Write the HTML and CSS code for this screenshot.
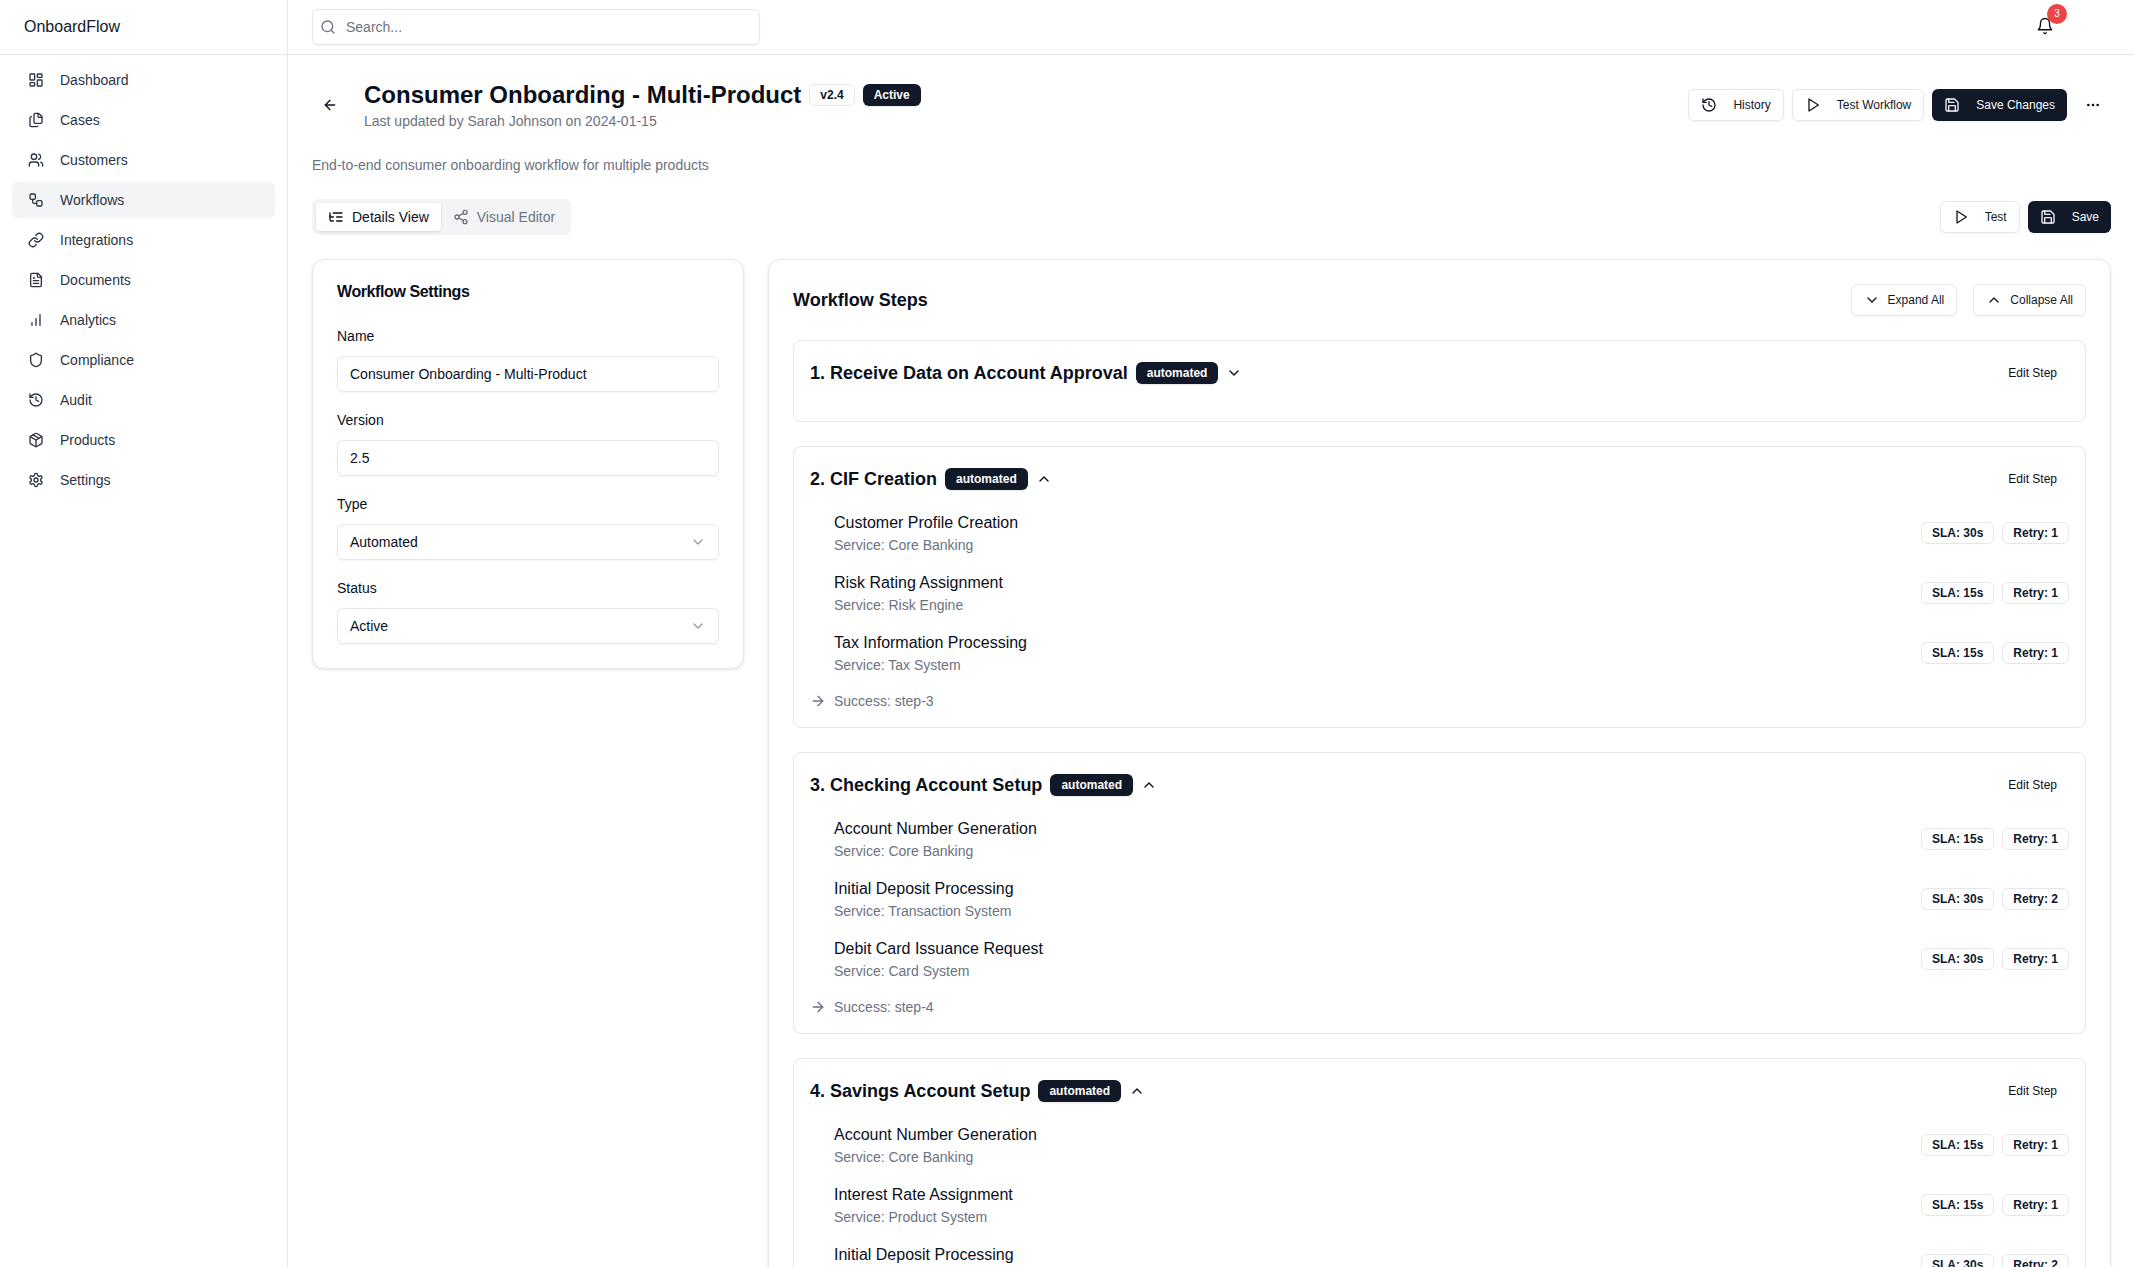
FILE: index.html
```html
<!DOCTYPE html>
<html lang="en">
<head>
<meta charset="utf-8">
<title>OnboardFlow</title>
<link rel="stylesheet" href="styles.css">
</head>
<body>
<svg class="defs" width="0" height="0" aria-hidden="true">
  <defs>
    <symbol id="i-dash" viewBox="0 0 24 24"><rect width="7" height="9" x="3" y="3" rx="1"/><rect width="7" height="5" x="14" y="3" rx="1"/><rect width="7" height="9" x="14" y="12" rx="1"/><rect width="7" height="5" x="3" y="16" rx="1"/></symbol>
    <symbol id="i-files" viewBox="0 0 24 24"><path d="M15 2h-4a2 2 0 0 0-2 2v11a2 2 0 0 0 2 2h8a2 2 0 0 0 2-2V8"/><path d="M16.706 2.706A2.4 2.4 0 0 0 15 2v5a1 1 0 0 0 1 1h5a2.4 2.4 0 0 0-.706-1.706z"/><path d="M5 7a2 2 0 0 0-2 2v11a2 2 0 0 0 2 2h8a2 2 0 0 0 1.732-1"/></symbol>
    <symbol id="i-users" viewBox="0 0 24 24"><path d="M16 21v-2a4 4 0 0 0-4-4H6a4 4 0 0 0-4 4v2"/><circle cx="9" cy="7" r="4"/><path d="M22 21v-2a4 4 0 0 0-3-3.87"/><path d="M16 3.13a4 4 0 0 1 0 7.75"/></symbol>
    <symbol id="i-flow" viewBox="0 0 24 24"><rect width="8" height="8" x="3" y="3" rx="2"/><path d="M7 11v4a2 2 0 0 0 2 2h4"/><rect width="8" height="8" x="13" y="13" rx="2"/></symbol>
    <symbol id="i-link" viewBox="0 0 24 24"><path d="M10 13a5 5 0 0 0 7.54.54l3-3a5 5 0 0 0-7.07-7.07l-1.72 1.71"/><path d="M14 11a5 5 0 0 0-7.54-.54l-3 3a5 5 0 0 0 7.07 7.07l1.71-1.71"/></symbol>
    <symbol id="i-file" viewBox="0 0 24 24"><path d="M15 2H6a2 2 0 0 0-2 2v16a2 2 0 0 0 2 2h12a2 2 0 0 0 2-2V7Z"/><path d="M14 2v4a2 2 0 0 0 2 2h4"/><path d="M10 9H8"/><path d="M16 13H8"/><path d="M16 17H8"/></symbol>
    <symbol id="i-chart" viewBox="0 0 24 24"><path d="M12 20V10"/><path d="M18 20V4"/><path d="M6 20v-4"/></symbol>
    <symbol id="i-shield" viewBox="0 0 24 24"><path d="M20 13c0 5-3.5 7.5-7.66 8.95a1 1 0 0 1-.67-.01C7.5 20.5 4 18 4 13V6a1 1 0 0 1 1-1c2 0 4.5-1.2 6.24-2.72a1.17 1.17 0 0 1 1.52 0C14.51 3.81 17 5 19 5a1 1 0 0 1 1 1z"/></symbol>
    <symbol id="i-history" viewBox="0 0 24 24"><path d="M3 12a9 9 0 1 0 9-9 9.75 9.75 0 0 0-6.74 2.74L3 8"/><path d="M3 3v5h5"/><path d="M12 7v5l4 2"/></symbol>
    <symbol id="i-package" viewBox="0 0 24 24"><path d="m7.5 4.27 9 5.15"/><path d="M21 8a2 2 0 0 0-1-1.73l-7-4a2 2 0 0 0-2 0l-7 4A2 2 0 0 0 3 8v8a2 2 0 0 0 1 1.73l7 4a2 2 0 0 0 2 0l7-4A2 2 0 0 0 21 16Z"/><path d="m3.3 7 8.7 5 8.7-5"/><path d="M12 22V12"/></symbol>
    <symbol id="i-gear" viewBox="0 0 24 24"><path d="M12.22 2h-.44a2 2 0 0 0-2 2v.18a2 2 0 0 1-1 1.73l-.43.25a2 2 0 0 1-2 0l-.15-.08a2 2 0 0 0-2.73.73l-.22.38a2 2 0 0 0 .73 2.73l.15.1a2 2 0 0 1 1 1.72v.51a2 2 0 0 1-1 1.74l-.15.09a2 2 0 0 0-.73 2.73l.22.38a2 2 0 0 0 2.73.73l.15-.08a2 2 0 0 1 2 0l.43.25a2 2 0 0 1 1 1.73V20a2 2 0 0 0 2 2h.44a2 2 0 0 0 2-2v-.18a2 2 0 0 1 1-1.73l.43-.25a2 2 0 0 1 2 0l.15.08a2 2 0 0 0 2.73-.73l.22-.39a2 2 0 0 0-.73-2.73l-.15-.08a2 2 0 0 1-1-1.74v-.5a2 2 0 0 1 1-1.74l.15-.09a2 2 0 0 0 .73-2.73l-.22-.38a2 2 0 0 0-2.73-.73l-.15.08a2 2 0 0 1-2 0l-.43-.25a2 2 0 0 1-1-1.73V4a2 2 0 0 0-2-2z"/><circle cx="12" cy="12" r="3"/></symbol>
    <symbol id="i-search" viewBox="0 0 24 24"><path d="m21 21-4.3-4.3"/><circle cx="11" cy="11" r="8"/></symbol>
    <symbol id="i-bell" viewBox="0 0 24 24"><path d="M6 8a6 6 0 0 1 12 0c0 7 3 9 3 9H3s3-2 3-9"/><path d="M10.3 21a1.94 1.94 0 0 0 3.4 0"/></symbol>
    <symbol id="i-back" viewBox="0 0 24 24"><path d="m12 19-7-7 7-7"/><path d="M19 12H5"/></symbol>
    <symbol id="i-next" viewBox="0 0 24 24"><path d="M5 12h14"/><path d="m12 5 7 7-7 7"/></symbol>
    <symbol id="i-play" viewBox="0 0 24 24"><polygon points="6 3 20 12 6 21 6 3"/></symbol>
    <symbol id="i-save" viewBox="0 0 24 24"><path d="M15.2 3a2 2 0 0 1 1.4.6l3.8 3.8a2 2 0 0 1 .6 1.4V19a2 2 0 0 1-2 2H5a2 2 0 0 1-2-2V5a2 2 0 0 1 2-2z"/><path d="M17 21v-7a1 1 0 0 0-1-1H8a1 1 0 0 0-1 1v7"/><path d="M7 3v4a1 1 0 0 0 1 1h7"/></symbol>
    <symbol id="i-more" viewBox="0 0 24 24"><circle cx="12" cy="12" r="1"/><circle cx="19" cy="12" r="1"/><circle cx="5" cy="12" r="1"/></symbol>
    <symbol id="i-down" viewBox="0 0 24 24"><path d="m6 9 6 6 6-6"/></symbol>
    <symbol id="i-up" viewBox="0 0 24 24"><path d="m18 15-6-6-6 6"/></symbol>
    <symbol id="i-tree" viewBox="0 0 24 24"><path d="M21 12h-8"/><path d="M21 6H8"/><path d="M21 18h-8"/><path d="M3 6v4c0 1.1.9 2 2 2h3"/><path d="M3 10v6c0 1.1.9 2 2 2h3"/></symbol>
    <symbol id="i-share" viewBox="0 0 24 24"><circle cx="18" cy="5" r="3"/><circle cx="6" cy="12" r="3"/><circle cx="18" cy="19" r="3"/><line x1="8.59" x2="15.42" y1="13.51" y2="17.49"/><line x1="15.41" x2="8.59" y1="6.51" y2="10.49"/></symbol>
  </defs>
</svg>
<div class="app">
  <aside class="sidebar">
    <div class="brand">OnboardFlow</div>
    <nav class="nav">
      <a class="nav-item"><svg class="ic"><use href="#i-dash"/></svg>Dashboard</a>
      <a class="nav-item"><svg class="ic"><use href="#i-files"/></svg>Cases</a>
      <a class="nav-item"><svg class="ic"><use href="#i-users"/></svg>Customers</a>
      <a class="nav-item is-active"><svg class="ic"><use href="#i-flow"/></svg>Workflows</a>
      <a class="nav-item"><svg class="ic"><use href="#i-link"/></svg>Integrations</a>
      <a class="nav-item"><svg class="ic"><use href="#i-file"/></svg>Documents</a>
      <a class="nav-item"><svg class="ic"><use href="#i-chart"/></svg>Analytics</a>
      <a class="nav-item"><svg class="ic"><use href="#i-shield"/></svg>Compliance</a>
      <a class="nav-item"><svg class="ic"><use href="#i-history"/></svg>Audit</a>
      <a class="nav-item"><svg class="ic"><use href="#i-package"/></svg>Products</a>
      <a class="nav-item"><svg class="ic"><use href="#i-gear"/></svg>Settings</a>
    </nav>
  </aside>
  <div class="main">
    <header class="topbar">
      <div class="search"><svg class="ic search-ic"><use href="#i-search"/></svg><span>Search...</span></div>
      <div class="bell"><svg class="ic bell-ic"><use href="#i-bell"/></svg><span class="bell-count">3</span></div>
    </header>
    <main class="content">
      <div class="page-head">
        <div class="page-title-group">
          <svg class="ic back"><use href="#i-back"/></svg>
          <div>
            <div class="title-row">
              <h1 class="title">Consumer Onboarding - Multi-Product</h1>
              <span class="badge badge-outline">v2.4</span>
              <span class="badge badge-dark">Active</span>
            </div>
            <p class="updated">Last updated by Sarah Johnson on 2024-01-15</p>
          </div>
        </div>
        <div class="actions">
          <button class="btn"><svg class="ic"><use href="#i-history"/></svg>History</button>
          <button class="btn"><svg class="ic"><use href="#i-play"/></svg>Test Workflow</button>
          <button class="btn btn-dark"><svg class="ic"><use href="#i-save"/></svg>Save Changes</button>
          <span class="more"><svg class="ic"><use href="#i-more"/></svg></span>
        </div>
      </div>
      <p class="desc">End-to-end consumer onboarding workflow for multiple products</p>
      <div class="toolbar">
        <div class="tabs">
          <span class="tab is-active"><svg class="ic"><use href="#i-tree"/></svg>Details View</span>
          <span class="tab"><svg class="ic"><use href="#i-share"/></svg>Visual Editor</span>
        </div>
        <div class="toolbar-actions">
          <button class="btn"><svg class="ic"><use href="#i-play"/></svg>Test</button>
          <button class="btn btn-dark"><svg class="ic"><use href="#i-save"/></svg>Save</button>
        </div>
      </div>
      <div class="columns">
        <section class="card settings">
          <h2 class="settings-title">Workflow Settings</h2>
          <div class="field"><label class="label">Name</label><div class="control">Consumer Onboarding - Multi-Product</div></div>
          <div class="field"><label class="label">Version</label><div class="control">2.5</div></div>
          <div class="field"><label class="label">Type</label><div class="control">Automated<svg class="ic chev"><use href="#i-down"/></svg></div></div>
          <div class="field"><label class="label">Status</label><div class="control">Active<svg class="ic chev"><use href="#i-down"/></svg></div></div>
        </section>
        <section class="card steps">
          <div class="steps-head">
            <h2 class="steps-title">Workflow Steps</h2>
            <div class="steps-actions">
              <button class="btn"><svg class="ic"><use href="#i-down"/></svg>Expand All</button>
              <button class="btn"><svg class="ic"><use href="#i-up"/></svg>Collapse All</button>
            </div>
          </div>
          <article class="step step-closed">
            <div class="step-head">
              <div class="step-name"><h3 class="step-title">1. Receive Data on Account Approval</h3><span class="badge badge-dark">automated</span><svg class="ic step-chev"><use href="#i-down"/></svg></div>
              <span class="edit">Edit Step</span>
            </div>
          </article>
          <article class="step">
            <div class="step-head">
              <div class="step-name"><h3 class="step-title">2. CIF Creation</h3><span class="badge badge-dark">automated</span><svg class="ic step-chev"><use href="#i-up"/></svg></div>
              <span class="edit">Edit Step</span>
            </div>
            <div class="items">
              <div class="item"><div><div class="item-name">Customer Profile Creation</div><div class="item-service">Service: Core Banking</div></div><div class="tags"><span class="badge badge-outline">SLA: 30s</span><span class="badge badge-outline">Retry: 1</span></div></div>
              <div class="item"><div><div class="item-name">Risk Rating Assignment</div><div class="item-service">Service: Risk Engine</div></div><div class="tags"><span class="badge badge-outline">SLA: 15s</span><span class="badge badge-outline">Retry: 1</span></div></div>
              <div class="item"><div><div class="item-name">Tax Information Processing</div><div class="item-service">Service: Tax System</div></div><div class="tags"><span class="badge badge-outline">SLA: 15s</span><span class="badge badge-outline">Retry: 1</span></div></div>
            </div>
            <div class="success"><svg class="ic"><use href="#i-next"/></svg>Success: step-3</div>
          </article>
          <article class="step">
            <div class="step-head">
              <div class="step-name"><h3 class="step-title">3. Checking Account Setup</h3><span class="badge badge-dark">automated</span><svg class="ic step-chev"><use href="#i-up"/></svg></div>
              <span class="edit">Edit Step</span>
            </div>
            <div class="items">
              <div class="item"><div><div class="item-name">Account Number Generation</div><div class="item-service">Service: Core Banking</div></div><div class="tags"><span class="badge badge-outline">SLA: 15s</span><span class="badge badge-outline">Retry: 1</span></div></div>
              <div class="item"><div><div class="item-name">Initial Deposit Processing</div><div class="item-service">Service: Transaction System</div></div><div class="tags"><span class="badge badge-outline">SLA: 30s</span><span class="badge badge-outline">Retry: 2</span></div></div>
              <div class="item"><div><div class="item-name">Debit Card Issuance Request</div><div class="item-service">Service: Card System</div></div><div class="tags"><span class="badge badge-outline">SLA: 30s</span><span class="badge badge-outline">Retry: 1</span></div></div>
            </div>
            <div class="success"><svg class="ic"><use href="#i-next"/></svg>Success: step-4</div>
          </article>
          <article class="step">
            <div class="step-head">
              <div class="step-name"><h3 class="step-title">4. Savings Account Setup</h3><span class="badge badge-dark">automated</span><svg class="ic step-chev"><use href="#i-up"/></svg></div>
              <span class="edit">Edit Step</span>
            </div>
            <div class="items">
              <div class="item"><div><div class="item-name">Account Number Generation</div><div class="item-service">Service: Core Banking</div></div><div class="tags"><span class="badge badge-outline">SLA: 15s</span><span class="badge badge-outline">Retry: 1</span></div></div>
              <div class="item"><div><div class="item-name">Interest Rate Assignment</div><div class="item-service">Service: Product System</div></div><div class="tags"><span class="badge badge-outline">SLA: 15s</span><span class="badge badge-outline">Retry: 1</span></div></div>
              <div class="item"><div><div class="item-name">Initial Deposit Processing</div><div class="item-service">Service: Transaction System</div></div><div class="tags"><span class="badge badge-outline">SLA: 30s</span><span class="badge badge-outline">Retry: 2</span></div></div>
            </div>
          </article>
        </section>
      </div>
    </main>
  </div>
</div>
</body>
</html>
```
FILE: styles.css
```css
* { box-sizing: border-box; }
html, body { margin: 0; height: 100%; overflow: hidden; }
body { font-family: "Liberation Sans", Arial, sans-serif; font-size: 14px; line-height: 20px; color: #0a0f1c; background: #fff; }
h1, h2, h3, p { margin: 0; }
.defs { position: absolute; }
.ic { width: 16px; height: 16px; flex: none; fill: none; stroke: currentColor; stroke-width: 2; stroke-linecap: round; stroke-linejoin: round; }
.app { display: flex; height: 100vh; }

.sidebar { width: 288px; flex: none; border-right: 1px solid #e5e7eb; background: #fff; }
.brand { height: 54px; padding-left: 24px; display: flex; align-items: center; font-size: 16px; border-bottom: 1px solid #e5e7eb; box-sizing: content-box; color: #111827; }
.nav { padding: 7px 12px; display: flex; flex-direction: column; gap: 4px; }
.nav-item { height: 36px; padding: 0 16px; display: flex; align-items: center; gap: 16px; border-radius: 6px; color: #2b3444; }
.nav-item.is-active { background: #f3f4f6; }

.main { flex: 1; min-width: 0; display: flex; flex-direction: column; }
.topbar { height: 55px; flex: none; padding: 0 24px; display: flex; align-items: center; justify-content: space-between; border-bottom: 1px solid #e5e7eb; }
.search { width: 448px; height: 36px; margin-bottom: 1px; padding: 0 7px; display: flex; align-items: center; gap: 10px; border: 1px solid #e5e7eb; border-radius: 6px; box-shadow: 0 1px 2px rgba(0,0,0,.05); color: #6b7280; }
.search-ic { color: #6b7280; }
.bell { position: relative; width: 18px; height: 18px; margin: 0 56px 3px 0; display: flex; }
.bell-ic { width: 18px; height: 18px; stroke-width: 1.8; }
.bell-count { position: absolute; top: -13px; left: 11px; width: 20px; height: 20px; border-radius: 50%; background: #ef4444; color: #fff; font-size: 10px; line-height: 20px; text-align: center; }

.content { flex: 1; min-height: 0; overflow: hidden; padding: 24px 23px 0 24px; }
.page-head { display: flex; justify-content: space-between; align-items: center; height: 52px; }
.page-title-group { display: flex; align-items: center; gap: 26px; }
.back { margin-left: 10px; }
.title-row { display: flex; align-items: center; gap: 8px; height: 32px; }
.title { font-size: 24px; line-height: 32px; font-weight: 700; color: #0a0f1c; }
.updated { color: #6b7280; }
.actions { display: flex; align-items: center; gap: 8px; }
.more { width: 36px; height: 32px; display: flex; align-items: center; justify-content: center; }

.badge { display: inline-flex; align-items: center; height: 22px; padding: 0 10px; border-radius: 6px; font-size: 12px; line-height: 16px; font-weight: 700; white-space: nowrap; }
.badge-outline { border: 1px solid #e5e7eb; color: #0f172a; }
.badge-dark { padding: 0 11px; background: #111827; color: #fff; box-shadow: 0 1px 2px rgba(0,0,0,.1); }

.btn { height: 32px; padding: 0 12px; display: inline-flex; align-items: center; gap: 16px; border: 1px solid #e5e7eb; border-radius: 6px; background: #fff; font: inherit; font-size: 12px; color: #111827; box-shadow: 0 1px 2px rgba(0,0,0,.05); }
.btn-dark { background: #111827; border: 0; color: #f9fafb; }

.desc { margin-top: 24px; color: #6b7280; }
.toolbar { margin-top: 24px; display: flex; align-items: center; justify-content: space-between; }
.tabs { height: 36px; padding: 4px; display: flex; background: #f3f4f6; border-radius: 6px; }
.tab { padding: 0 12px; display: flex; align-items: center; gap: 8px; border-radius: 4px; color: #6b7280; }
.tab.is-active { background: #fff; color: #0a0f1c; box-shadow: 0 1px 3px rgba(0,0,0,.12); }
.toolbar-actions { display: flex; gap: 8px; }

.columns { margin-top: 24px; display: grid; grid-template-columns: 432px 1fr; gap: 24px; align-items: start; }
.card { border: 1px solid #e5e7eb; border-radius: 12px; background: #fff; padding: 24px; box-shadow: 0 1px 3px rgba(0,0,0,.1); }
.settings-title { font-size: 16px; line-height: 16px; font-weight: 700; letter-spacing: -.4px; margin-bottom: 26px; }
.field { margin-top: 18px; }
.settings-title + .field { margin-top: 0; }
.label { display: block; margin-bottom: 10px; }
.control { position: relative; height: 36px; padding: 0 12px; display: flex; align-items: center; justify-content: space-between; border: 1px solid #e5e7eb; border-radius: 6px; box-shadow: 0 1px 2px rgba(0,0,0,.05); }
.chev { color: #6b7280; opacity: .7; }

.steps-head { display: flex; align-items: center; justify-content: space-between; height: 32px; }
.steps-title { font-size: 18px; line-height: 28px; font-weight: 700; }
.steps-actions { display: flex; gap: 16px; }
.steps-actions .btn { gap: 8px; }
.step { margin-top: 24px; border: 1px solid #e5e7eb; border-radius: 8px; padding: 16px; }
.step-closed { height: 82px; }
.step-head { display: flex; align-items: center; justify-content: space-between; height: 32px; }
.step-name { display: flex; align-items: center; gap: 8px; }
.step-title { font-size: 18px; line-height: 28px; font-weight: 700; }
.edit { padding: 0 12px; line-height: 32px; font-size: 12px; }
.items { margin-top: 16px; padding-left: 24px; display: flex; flex-direction: column; gap: 16px; }
.item { display: flex; align-items: center; justify-content: space-between; }
.item-name { font-size: 16px; line-height: 24px; }
.item-service { color: #6b7280; }
.tags { display: flex; gap: 8px; }
.success { margin-top: 16px; display: flex; align-items: center; gap: 8px; color: #6b7280; }
```
